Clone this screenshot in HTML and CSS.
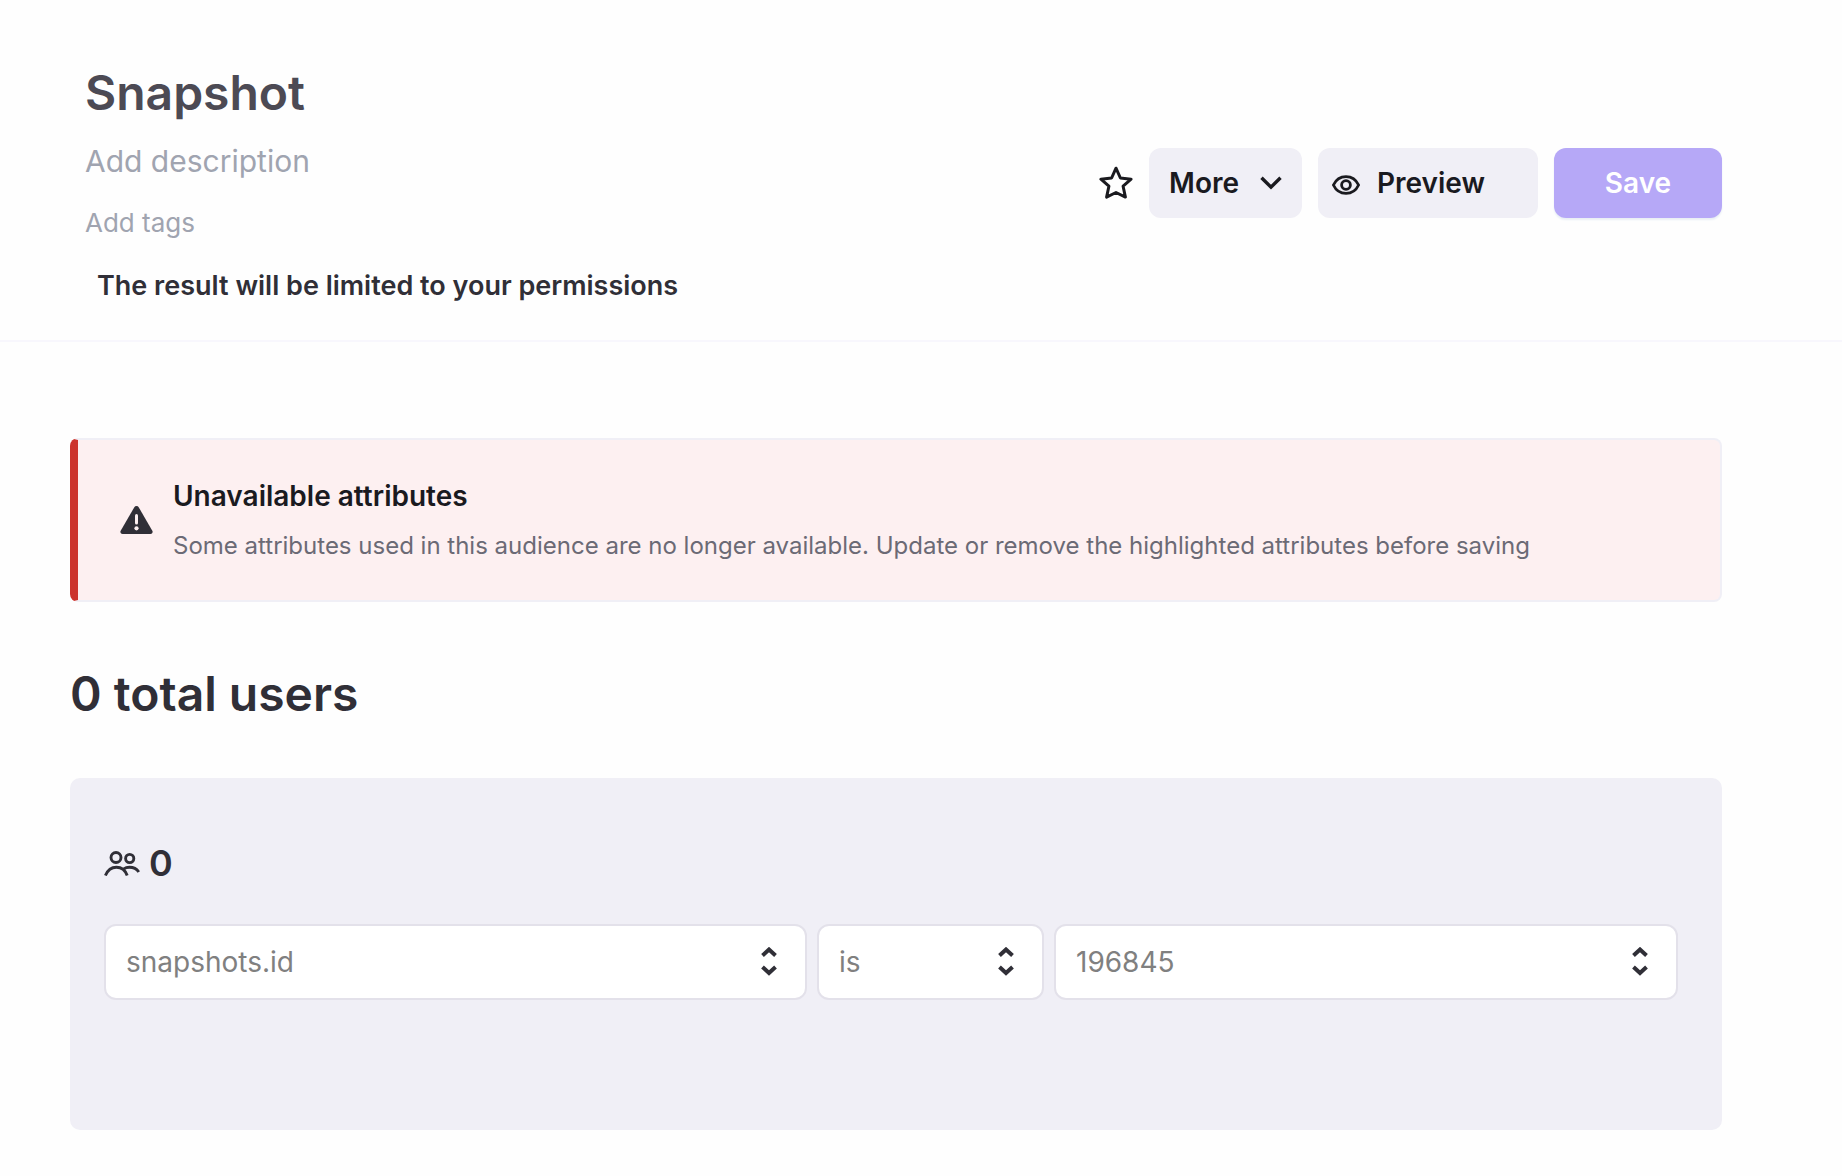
FILE: index.html
```html
<!DOCTYPE html>
<html lang="en">
<head>
<meta charset="utf-8">
<meta name="viewport" content="width=device-width, initial-scale=1">
<title>Snapshot</title>
<link rel="stylesheet" href="styles.css">
</head>
<body>
<header class="header">
  <div class="details">
    <h1 class="title">Snapshot</h1>
    <input class="ghost-input description" type="text" placeholder="Add description" aria-label="Description">
    <input class="ghost-input tags" type="text" placeholder="Add tags" aria-label="Tags">
    <p class="notice">The result will be limited to your permissions</p>
  </div>
  <div class="actions">
    <button class="star" type="button" aria-label="Add to favorites">
      <svg width="34" height="34" viewBox="0 0 34 34" fill="none" stroke="currentColor" stroke-width="3" stroke-linejoin="round"><path d="M17 2.200 21.400 12l10.700 1.200-8 7 2.300 10.900-9.400-4.600-9.400 4.600 2.300-10.900-8-7L12.600 12z"/></svg>
    </button>
    <button class="button more" type="button">More
      <svg width="22" height="14" viewBox="0 0 22 14" fill="none" stroke="currentColor" stroke-width="3.400"><path d="M1.500 1.800 11 11.200l9.500-9.400"/></svg>
    </button>
    <button class="button preview" type="button">
      <svg width="28" height="24" viewBox="0 0 28 24" fill="none" stroke="currentColor" stroke-width="2.800"><path d="M1.400 14C4 8.400 8.500 5.600 14 5.600S24 8.400 26.600 14C24 19.600 19.500 22.400 14 22.400S4 19.600 1.400 14z" stroke-linejoin="round"/><circle cx="14" cy="14" r="4.400"/></svg>
      Preview
    </button>
    <button class="button save" type="button">Save</button>
  </div>
</header>
<main class="content">
  <section class="alert" role="alert">
    <svg width="33" height="28" viewBox="0 0 33 28"><path d="M14.200 1.400a2.700 2.700 0 0 1 4.600 0l13.500 23.300A2.200 2.200 0 0 1 30.400 28H2.600A2.200 2.200 0 0 1 .7 24.700z" fill="#302f37"/><path d="M16.500 9.500v7.500" stroke="#fdf0f1" stroke-width="3" stroke-linecap="round"/><circle cx="16.500" cy="22.300" r="2.100" fill="#fdf0f1"/></svg>
    <div class="alert-body">
      <h2 class="alert-title">Unavailable attributes</h2>
      <p class="alert-text">Some attributes used in this audience are no longer available. Update or remove the highlighted attributes before saving</p>
    </div>
  </section>
  <h2 class="total">0 total users</h2>
  <section class="panel">
    <div class="count">
      <svg width="36" height="26" viewBox="0 0 36 26" fill="none" stroke="currentColor" stroke-width="2.900"><circle cx="12" cy="7.500" r="5"/><circle cx="25.700" cy="8.500" r="4.100"/><path d="M1.400 25.500C3.500 20.500 7.300 17.200 12.400 17.200s8.800 2.700 10.800 8.300M19.800 18.900c1.600-1.200 3.500-1.700 5.600-1.700 4.200 0 7.400 1.700 9.400 4.800"/></svg>
      0
    </div>
    <div class="filters">
      <div class="field">
        <select class="select" aria-label="Attribute" disabled><option>snapshots.id</option></select>
        <svg class="sort" width="16" height="30" viewBox="0 0 16 30"><path d="m1.500 8.500 6.500-6 6.500 6M1.500 20l6.500 6 6.500-6"/></svg>
      </div>
      <div class="field">
        <select class="select" aria-label="Operator" disabled><option>is</option></select>
        <svg class="sort" width="16" height="30" viewBox="0 0 16 30"><path d="m1.500 8.500 6.500-6 6.500 6M1.500 20l6.500 6 6.500-6"/></svg>
      </div>
      <div class="field">
        <select class="select" aria-label="Value" disabled><option>196845</option></select>
        <svg class="sort" width="16" height="30" viewBox="0 0 16 30"><path d="m1.500 8.500 6.500-6 6.500 6M1.500 20l6.500 6 6.500-6"/></svg>
      </div>
    </div>
  </section>
</main>
</body>
</html>
```
FILE: styles.css
```css
* {
  box-sizing: border-box;
}

body {
  margin: 0;
  background: #fefefe;
  color: #302f37;
  font-family: Inter, "Liberation Sans", sans-serif;
}

h1, h2, p {
  margin: 0;
}

button, input, select {
  margin: 0;
  font-family: inherit;
}

svg {
  flex: none;
}

.header {
  display: flex;
  align-items: center;
  justify-content: space-between;
  gap: 40px;
  padding: 64px 120px 38px 85px;
  border-bottom: 2px solid #f8f7fd;
}

.details {
  display: flex;
  flex: 1;
  flex-direction: column;
}

.title {
  color: #4c4a54;
  font-size: 48px;
  font-weight: 600;
  line-height: 58px;
}

.ghost-input {
  padding: 0;
  border: 0;
  background: none;
}

.ghost-input::placeholder {
  color: #a0a4b0;
  opacity: 1;
}

.description {
  height: 40px;
  margin-top: 19px;
  font-size: 30px;
}

.tags {
  height: 36px;
  margin-top: 23px;
  font-size: 26px;
}

.notice {
  margin-top: 30px;
  padding-left: 12px;
  font-size: 27px;
  font-weight: 600;
  line-height: 32px;
}

.actions {
  display: flex;
  align-items: center;
  gap: 16px;
}

.star {
  display: flex;
  padding: 0;
  border: 0;
  background: none;
  color: #1a1a1f;
}

.button {
  display: flex;
  align-items: center;
  height: 70px;
  border: 0;
  border-radius: 12px;
  background: #f0eff6;
  color: #1a1a1f;
  font-size: 28px;
  font-weight: 600;
}

.more {
  gap: 21px;
  padding: 0 20px;
}

.preview {
  gap: 17px;
  min-width: 220px;
  padding: 0 14px;
}

.save {
  justify-content: center;
  min-width: 168px;
  background: #b6a8f7;
  box-shadow: 0 2px 2px #e9eff5;
  color: #fff;
}

.content {
  padding: 96px 120px 46px 70px;
}

.alert {
  display: flex;
  align-items: center;
  gap: 20px;
  min-height: 164px;
  padding: 0 42px;
  border: 2px solid #f0eff6;
  border-left: 8px solid #cc342d;
  border-radius: 8px;
  background: #fdf0f1;
}

.alert-title {
  color: #1a1a1f;
  font-size: 28px;
  font-weight: 600;
  line-height: 36px;
}

.alert-text {
  margin-top: 16px;
  color: #6b6a75;
  font-size: 24px;
  line-height: 32px;
}

.total {
  margin-top: 63px;
  font-size: 48px;
  font-weight: 600;
  line-height: 58px;
}

.panel {
  margin-top: 55px;
  padding: 63px 44px 130px 34px;
  border-radius: 10px;
  background: #f0eff6;
}

.count {
  display: flex;
  align-items: center;
  gap: 9px;
  font-size: 36px;
  font-weight: 600;
  line-height: 44px;
}

.filters {
  display: grid;
  grid-template-columns: 703fr 227fr 624fr;
  gap: 10px;
  margin-top: 39px;
}

.field {
  display: grid;
  align-items: center;
}

.select {
  grid-area: 1 / 1;
  width: 100%;
  height: 76px;
  padding: 0 60px 0 20px;
  border: 2px solid #e3e1ea;
  border-radius: 12px;
  appearance: none;
  background: #fff;
  color: #808080;
  font-size: 28px;
  opacity: 1;
}

.sort {
  grid-area: 1 / 1;
  justify-self: end;
  margin-right: 30px;
  fill: none;
  stroke: #302f37;
  stroke-width: 4;
  pointer-events: none;
}
```
